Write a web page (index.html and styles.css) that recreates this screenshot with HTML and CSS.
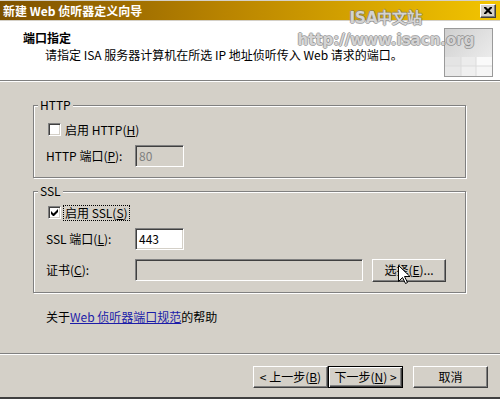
FILE: index.html
```html
<!DOCTYPE html>
<html lang="zh-CN">
<head>
  <meta charset="UTF-8" />
  <title>新建 Web 侦听器定义向导</title>
  <link rel="stylesheet" href="styles.css">
</head>
<body>

  <div class="window">
    <div class="titlebar">
      <span class="title">新建 Web 侦听器定义向导</span>
      <span class="close">
        <svg width="8" height="7" viewBox="0 0 8 7">
          <path d="M0 0h2l2 2 2-2h2v1L5.5 3.5 8 6v1H6L4 5 2 7H0V6l2.5-2.5L0 1z" fill="#000"/>
        </svg>
      </span>
    </div>

    <div class="header">
      <div class="header-text">
        <div class="step">端口指定</div>
        <div class="desc">请指定 ISA 服务器计算机在所选 IP 地址侦听传入 Web 请求的端口。</div>
      </div>
      <!-- wizard picture -->
      <svg class="header-icon" width="49" height="49" viewBox="0 0 49 49">
        <defs>
          <linearGradient id="pic" x1="0" y1="0" x2="1" y2="1">
            <stop offset="0" stop-color="#cfcfcf"/>
            <stop offset="1" stop-color="#f3f3f3"/>
          </linearGradient>
        </defs>
        <rect x="0.5" y="0.5" width="48" height="48" fill="url(#pic)" stroke="#9a9a9a"/>
        <rect x="1" y="29" width="16" height="9" fill="#e4e4e4"/>
        <rect x="17" y="29" width="15" height="9" fill="#ececec"/>
        <rect x="32" y="29" width="16" height="9" fill="#fafafa"/>
        <rect x="1" y="38" width="16" height="10" fill="#e8e8e8"/>
        <rect x="17" y="38" width="15" height="10" fill="#f0f0f0"/>
        <rect x="32" y="38" width="16" height="10" fill="#f6f6f6"/>
        <path d="M17 29v19M32 29v19M1 38h47" stroke="#dcdcdc" stroke-width="1"/>
      </svg>
    </div>

    <div class="content">
      <div class="group group-http">
        <span class="legend">HTTP</span>
        <label class="check">
          <span class="box"></span>
          <span class="check-text">启用 HTTP(<u>H</u>)</span>
        </label>
        <div class="field">
          <span class="field-label">HTTP 端口(<u>P</u>):</span>
          <span class="input input-port disabled">80</span>
        </div>
      </div>

      <div class="group group-ssl">
        <span class="legend">SSL</span>
        <label class="check">
          <span class="box">
            <svg width="7" height="7" viewBox="0 0 7 7">
              <path d="M0 2v3l2 2h1l4-4V0L2.5 4.5z" fill="#000"/>
            </svg>
          </span>
          <span class="check-text focused">启用 SSL(<u>S</u>)</span>
        </label>
        <div class="field">
          <span class="field-label">SSL 端口(<u>L</u>):</span>
          <span class="input input-port">443</span>
        </div>
        <div class="field">
          <span class="field-label">证书(<u>C</u>):</span>
          <span class="input input-cert disabled"></span>
          <button class="btn btn-select">选择(<u>E</u>)...</button>
        </div>
      </div>

      <p class="help">关于<a href="#">Web 侦听器端口规范</a>的帮助</p>
    </div>

    <div class="footer">
      <button class="btn">&lt; 上一步(<u>B</u>)</button>
      <button class="btn btn-default">下一步(<u>N</u>) &gt;</button>
      <button class="btn btn-cancel">取消</button>
    </div>
    <div class="bottom-edge"></div>

    <!-- site watermark over the header -->
    <div class="watermark">
      <div class="wm-name">ISA中文站</div>
      <div class="wm-url">http://www.isacn.org</div>
    </div>

    <svg class="cursor" width="12" height="19" viewBox="0 0 12 19">
      <path d="M0.5 0.5v16l4-4 3 6 2-1-3-6h5.5z" fill="#fff" stroke="#000" stroke-width="1"/>
    </svg>
  </div>

</body>
</html>
```

FILE: styles.css
```css
/* Base */
body {
  margin: 0;
  background: #d4d0c8;
  font-family: "Noto Sans CJK SC", sans-serif;
  font-size: 12px;
  line-height: 12px;
  color: #000;
}

.window {
  position: relative;
  width: 500px;
  height: 399px;
  display: flex;
  flex-direction: column;
  overflow: hidden;
}

/* Title bar */
.titlebar {
  margin-top: 1px;
  height: 19px;
  padding: 0 4px 0 3px;
  display: flex;
  align-items: center;
  justify-content: space-between;
  background: linear-gradient(to right, #7d5100, #b98400 45%, #f3c500);
}

.title {
  color: #fff;
  font-weight: bold;
}

.close {
  width: 14px;
  height: 12px;
  display: flex;
  align-items: center;
  justify-content: center;
  background: #d4d0c8;
  border: 1px solid;
  border-color: #fff #404040 #404040 #fff;
  box-shadow: inset -1px -1px 0 #808080;
}

/* Header */
.header {
  margin-top: 1px;
  height: 59px;
  background: #fff;
  border-bottom: 1px solid #808080;
  box-shadow: 0 1px 0 #fff;
  display: flex;
  justify-content: space-between;
}

.header-text {
  padding: 11px 0 0 23px;
}

.step {
  font-weight: bold;
}

.desc {
  margin-top: 5px;
  padding-left: 22px;
}

.header-icon {
  margin: 7px 7px 0 0;
}

/* Group boxes */
.content {
  flex: 1;
  padding-top: 24px;
}

.group {
  margin: 0 34px 0 33px;
  padding: 0 0 10px 12px;
  border: 1px solid #808080;
  box-shadow: inset 1px 1px 0 #fff, 1px 1px 0 #fff;
  display: flex;
  flex-direction: column;
  align-items: flex-start;
}

.group-ssl {
  margin-top: 13px;
  padding-bottom: 11px;
}

.legend {
  margin: -7px 0 0 -8px;
  padding: 0 2px;
  background: #d4d0c8;
}

.check {
  height: 13px;
  margin: 12px 0 0 2px;
  display: flex;
  align-items: center;
}

.group-ssl .check {
  margin-top: 9px;
}

.box {
  width: 11px;
  height: 11px;
  background: #fff;
  border: 1px solid;
  border-color: #808080 #fff #fff #808080;
  box-shadow: inset 1px 1px 0 #404040, inset -1px -1px 0 #d4d0c8;
  display: flex;
  align-items: center;
  justify-content: center;
}

.check-text {
  margin-left: 2px;
  padding: 1px;
  border: 1px dotted transparent;
}

.check-text.focused {
  border-color: #000;
}

.field {
  height: 22px;
  margin-top: 9px;
  display: flex;
  align-items: center;
}

.field-label {
  width: 89px;
}

.input {
  box-sizing: border-box;
  height: 22px;
  padding: 4px 3px 0;
  background: #fff;
  border: 1px solid;
  border-color: #808080 #fff #fff #808080;
  box-shadow: inset 1px 1px 0 #404040, inset -1px -1px 0 #d4d0c8;
}

.input.disabled {
  background: #d4d0c8;
  color: #808080;
}

.input-port {
  width: 49px;
}

.input-cert {
  width: 228px;
}

/* Buttons */
.btn {
  box-sizing: border-box;
  width: 75px;
  height: 22px;
  padding: 0;
  font: inherit;
  color: #000;
  background: #d4d0c8;
  border: 1px solid;
  border-color: #fff #404040 #404040 #fff;
  box-shadow: inset -1px -1px 0 #808080;
}

.btn-select {
  width: 74px;
  height: 23px;
  margin-left: 9px;
}

.btn-default {
  border-color: #000;
  box-shadow: inset 1px 1px 0 #fff, inset -1px -1px 0 #404040, inset -2px -2px 0 #808080;
}

.btn-cancel {
  margin-left: 10px;
}

.help {
  margin: 18px 0 0;
  padding-left: 46px;
}

.help a {
  color: #1c1ca8;
}

/* Footer */
.footer {
  height: 22px;
  padding: 12px 12px 9px 0;
  border-top: 1px solid #808080;
  box-shadow: inset 0 1px 0 #fff;
  display: flex;
  justify-content: flex-end;
}

.bottom-edge {
  height: 1px;
  border-top: 1px solid #404040;
  background: #404040;
}

/* Overlays */
.watermark {
  position: absolute;
  top: 11px;
  left: 297px;
  width: 178px;
  text-align: center;
  font-family: "DejaVu Sans", sans-serif;
  font-weight: bold;
  font-size: 15px;
  line-height: 15px;
  color: rgba(236, 236, 236, 0.8);
  text-shadow: 1px 0 0 rgba(120, 120, 120, 0.6), -1px 0 0 rgba(120, 120, 120, 0.6),
    0 1px 0 rgba(120, 120, 120, 0.6), 0 -1px 0 rgba(120, 120, 120, 0.6);
  pointer-events: none;
}

.wm-url {
  margin-top: 7px;
}

.cursor {
  position: absolute;
  left: 398px;
  top: 265px;
}
```
